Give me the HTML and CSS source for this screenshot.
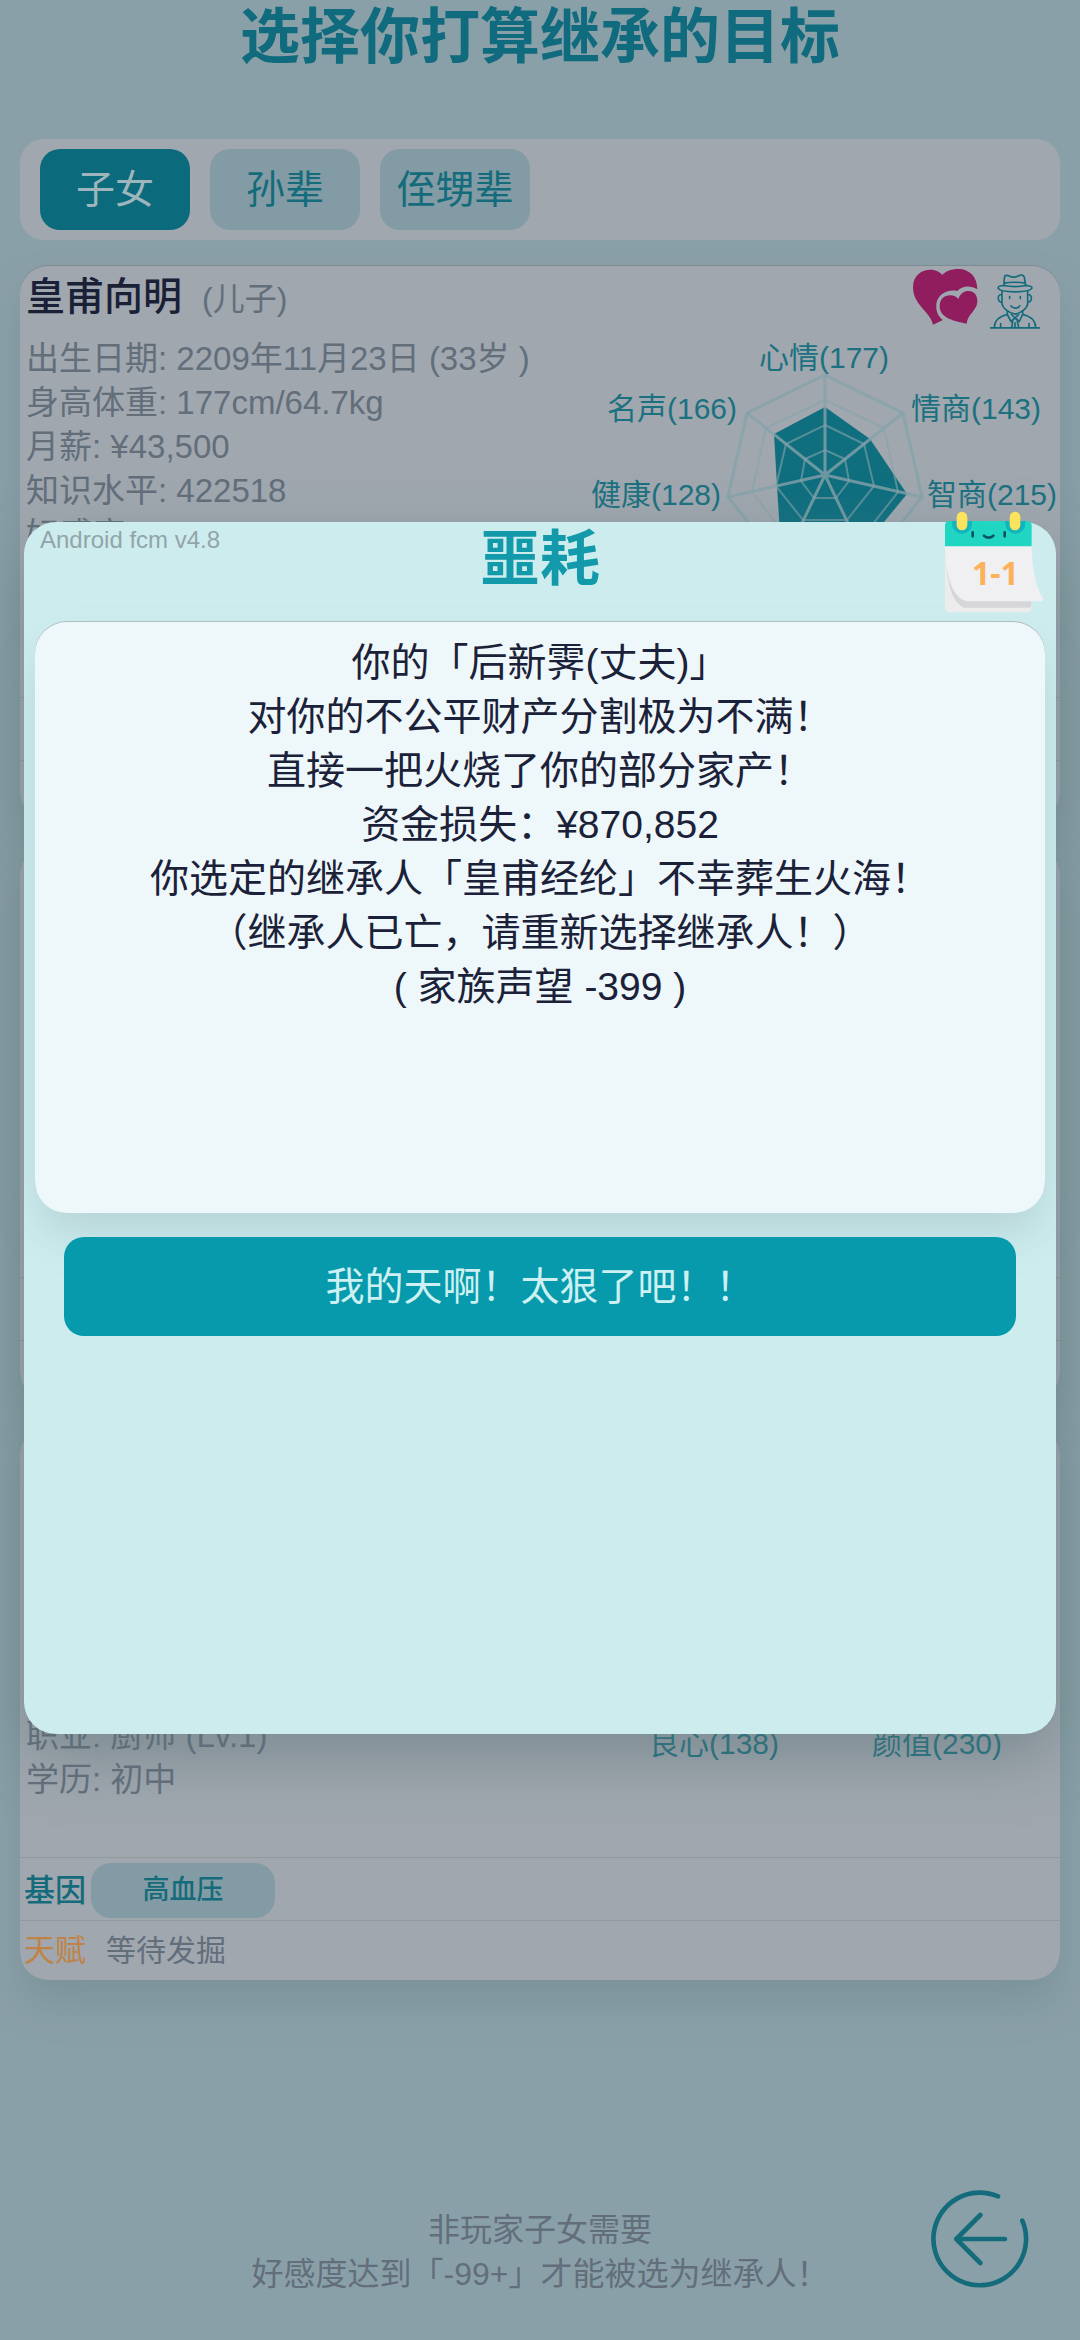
FILE: index.html
```html
<!DOCTYPE html>
<html lang="zh-CN">
<head>
<meta charset="utf-8">
<meta name="viewport" content="width=device-width, initial-scale=1">
<title>选择你打算继承的目标</title>
<link rel="stylesheet" href="styles.css">
</head>
<body>
<svg class="defs" aria-hidden="true">
  <defs>
    <g id="radar-grid" fill="none">
      <path d="M245 42 323 80 342 164 288 232 202 232 148 164 167 80Z"/>
      <path class="ring" d="M245 67 304 95 318 159 278 210 212 210 172 159 186 95Z"/>
      <path class="ring" d="M245 92 284 111 294 153 267 187 223 187 196 153 206 111Z"/>
      <path class="ring" d="M245 117 265 126 269 148 256 165 234 165 221 148 225 126Z"/>
      <path d="M245 142V42M245 142 323 80M245 142 342 164M245 142 288 232M245 142 202 232M245 142 148 164M245 142 167 80"/>
    </g>
  </defs>
</svg>

<div class="page">
  <h1 class="page-title">选择你打算继承的目标</h1>

  <nav class="tabs">
    <button class="tab tab-active" type="button">子女</button>
    <button class="tab" type="button">孙辈</button>
    <button class="tab" type="button">侄甥辈</button>
  </nav>

  <main class="cards">
    <article class="card">
      <header class="card-head">
        <h2 class="name">皇甫向明</h2>
        <span class="relation">(儿子)</span>
        <svg class="icon-hearts" viewBox="0 0 195 168" aria-hidden="true">
          <path fill="#901e5f" d="M60 167C52 128 0 108 0 55 0 18 27 2 52 2 70 2 82 10 88 18 98 6 116 0 136 0 170 0 193 24 193 61 170 48 147 51 133 66 101 60 73 78 70 106 68 130 78 146 90 153Z"/>
          <path fill="#901e5f" d="M161 164C128 158 80 148 80 112 80 90 94 79 111 79 123 79 131 84 136 90 142 74 153 66 166 66 184 66 194 80 193 99 191 126 163 136 161 164Z"/>
        </svg>
        <svg class="icon-person" viewBox="0 0 150 164" fill="none" stroke="#146b7b" stroke-width="5" stroke-linecap="round" stroke-linejoin="round" aria-hidden="true">
          <path d="M42 34C42 22 42 12 45 5 52 1 58 6 64 8 72 10 80 8 86 5 93 0 101 3 103 9L107 34M42 27C60 24 89 24 106 27"/>
          <path d="M42 34C30 34 24 37 24 42 28 50 50 53 75 53 100 53 121 50 126 42 126 37 119 34 107 34 88 38 62 38 42 34Z"/>
          <path d="M36 52V88C38 102 56 117 75 120 94 117 112 102 113 88V52M36 61C20 60 22 84 36 84M113 61C129 60 127 84 113 84"/>
          <path d="M59 67V73M91 67V73M63 95C68 104 84 104 89 95"/>
          <path d="M52 111V121L63 142 75 130 88 142 98 121V111M52 121C28 126 14 136 13 160M98 121C122 126 136 136 137 160M64 121 86 142M86 121 64 142M68 142 65 160M82 142 86 160M75 146V160M32 148V160M117 148V160M2 161H148"/>
        </svg>
      </header>
      <div class="card-body">
        <ul class="facts">
          <li>出生日期: 2209年11月23日 (33岁 )</li>
          <li>身高体重: 177cm/64.7kg</li>
          <li>月薪: ¥43,500</li>
          <li>知识水平: 422518</li>
          <li>好感度: -99</li>
        </ul>
        <svg class="radar" viewBox="0 0 480 290" role="img" aria-label="属性">
          <path class="radar-value" d="M245 74 290 106 327 161 281 217 202 232 197 153 194 101Z"/>
          <use href="#radar-grid"/>
          <text x="244" y="35">心情(177)</text>
          <text x="396" y="86">情商(143)</text>
          <text x="412" y="172">智商(215)</text>
          <text x="76" y="172">健康(128)</text>
          <text x="92" y="86">名声(166)</text>
        </svg>
      </div>
      <div class="row gene"></div>
      <div class="row talent"></div>
    </article>

    <article class="card">
      <header class="card-head"></header>
      <div class="card-body"></div>
      <div class="row gene"></div>
      <div class="row talent"></div>
    </article>

    <article class="card">
      <header class="card-head"></header>
      <div class="card-body">
        <ul class="facts facts-end">
          <li>职业: 厨师 (Lv.1)</li>
          <li>学历: 初中</li>
        </ul>
        <svg class="radar" viewBox="0 0 480 290" role="img" aria-label="属性">
          <use href="#radar-grid"/>
          <text x="134" y="261">良心(138)</text>
          <text x="357" y="261">颜值(230)</text>
        </svg>
      </div>
      <div class="row gene">
        <span class="gene-label">基因</span>
        <span class="pill">高血压</span>
      </div>
      <div class="row talent">
        <span class="talent-label">天赋</span>
        <span>等待发掘</span>
      </div>
    </article>
  </main>

  <footer class="footer">
    <p class="hint">非玩家子女需要<br>好感度达到「-99+」才能被选为继承人！</p>
    <button class="back" type="button" aria-label="返回">
      <svg viewBox="0 0 294 294" fill="none" stroke="#146b7b" stroke-width="14" stroke-linecap="round" stroke-linejoin="round">
        <path d="M201 19A139 139 0 1 0 274 92M222 147H76M148 75 76 147 148 219"/>
      </svg>
    </button>
  </footer>
</div>

<div class="overlay">
  <section class="dialog" role="dialog" aria-modal="true" aria-labelledby="dialog-title">
    <span class="version">Android fcm v4.8</span>
    <h2 class="dialog-title" id="dialog-title">噩耗</h2>
    <svg class="calendar" viewBox="0 0 300 306" aria-label="1-1">
      <rect x="3" y="70" width="260" height="234" rx="14" fill="#ececec"/>
      <path fill="#d6d6d8" d="M3 106V110C10 220 20 270 60 290H255Q262 290 262 282V250Z"/>
      <path fill="#f0eff2" d="M3 100H263C264 170 275 230 297 262Q299 270 290 271H70C20 262 4 180 3 100Z"/>
      <path fill="#20d6c2" d="M3 106V44Q3 30 17 30H249Q263 30 263 44V106Z"/>
      <path fill="#12b5bd" d="M24 30H84V38A30 30 0 0 1 24 38ZM184 30H244V38A30 30 0 0 1 184 38Z"/>
      <rect x="38" y="2" width="32" height="56" rx="16" fill="#fbe35e"/>
      <rect x="197" y="2" width="32" height="56" rx="16" fill="#fbe35e"/>
      <path d="M86 64V76M182 64V76M120 74Q134 86 148 74" fill="none" stroke="#0f5261" stroke-width="8" stroke-linecap="round"/>
      <text x="154" y="222">1-1</text>
    </svg>
    <div class="message">
      <p>你的「后新霁(丈夫)」</p>
      <p>对你的不公平财产分割极为不满！</p>
      <p>直接一把火烧了你的部分家产！</p>
      <p>资金损失：¥870,852</p>
      <p>你选定的继承人「皇甫经纶」不幸葬生火海！</p>
      <p>（继承人已亡，请重新选择继承人！）</p>
      <p>( 家族声望 -399 )</p>
    </div>
    <button class="confirm" type="button">我的天啊！太狠了吧！！</button>
  </section>
</div>
</body>
</html>
```
FILE: styles.css
```css
* {
  box-sizing: border-box;
  margin: 0;
  padding: 0;
}

body {
  background: #8aa0a8;
  color: #636e7b;
  font-family: "Liberation Sans", "Noto Sans CJK SC", sans-serif;
  font-size: 32px;
  line-height: 44px;
}

button {
  border: 0;
  font: inherit;
}

.defs {
  position: absolute;
  width: 0;
  height: 0;
}

.page {
  display: flex;
  flex-direction: column;
  min-height: 100vh;
  padding: 0 20px;
}

.page-title {
  color: #0f6b7d;
  font-size: 60px;
  line-height: 76px;
  text-align: center;
  margin-bottom: 63px;
}

.tabs {
  display: flex;
  gap: 20px;
  padding: 10px 20px;
  background: #a0a7af;
  border-radius: 24px;
}

.tab {
  width: 150px;
  height: 81px;
  border-radius: 20px;
  background: #829ba4;
  color: #146b7b;
  font-size: 39px;
}

.tab-active {
  background: #0b6b7c;
  color: #9fb5bc;
}

.cards {
  display: flex;
  flex-direction: column;
  gap: 25px;
  margin-top: 25px;
}

.card {
  display: flex;
  flex-direction: column;
  background: #a0a7af;
  border-radius: 28px;
  box-shadow: 0 24px 40px -4px rgba(100, 125, 130, 0.4), inset 0 1px #7d8a92;
}

.card-head {
  display: flex;
  align-items: center;
  height: 68px;
  padding: 0 20px 4px 6px;
}

.name {
  color: #1a2036;
  font-size: 39px;
  font-weight: 500;
}

.relation {
  flex: 1;
  padding: 4px 0 0 20px;
}

.icon-hearts {
  width: 65px;
  height: 56px;
}

.icon-person {
  width: 50px;
  height: 55px;
  margin: 8px 0 0 12px;
}

.card-body {
  display: flex;
  height: 364px;
}

.facts {
  flex: 1;
  font-size: 33px;
  list-style: none;
  padding: 4px 0 0 6px;
  white-space: nowrap;
}

.facts-end {
  padding-top: 221px;
}

.radar {
  flex: none;
  width: 480px;
  height: 290px;
}

.radar .radar-value {
  fill: #0f6f7f;
  stroke: none;
}

.radar use {
  stroke: #86a3aa;
  stroke-width: 3px;
  stroke-opacity: 0.8;
}

.ring {
  stroke-width: 2px;
  stroke-opacity: 0.6;
}

.radar text {
  fill: #1c7180;
  font-size: 30px;
  text-anchor: middle;
}

.row {
  display: flex;
  align-items: center;
  padding: 0 4px;
  border-top: 1px solid #8f999f;
}

.gene {
  gap: 5px;
  height: 63px;
  padding-top: 3px;
}

.talent {
  gap: 20px;
  height: 60px;
  font-size: 30px;
}

.gene-label {
  color: #146b7b;
  font-size: 31px;
  font-weight: 500;
}

.pill {
  width: 184px;
  border-radius: 20px;
  background: #829ba4;
  color: #146b7b;
  font-size: 27px;
  font-weight: 500;
  line-height: 55px;
  text-align: center;
}

.talent-label {
  color: #bf8347;
  font-size: 31px;
}

.footer {
  position: relative;
  margin-top: auto;
  padding-bottom: 44px;
}

.hint {
  text-align: center;
}

.back {
  position: absolute;
  right: 31px;
  bottom: 52px;
  width: 98px;
  height: 98px;
  background: none;
}

.back svg {
  display: block;
}

.overlay {
  position: absolute;
  inset: 0;
  padding: 522px 24px 0;
}

.dialog {
  position: relative;
  display: flex;
  flex-direction: column;
  min-height: 1212px;
  padding: 0 11px;
  background: #cdecee;
  border-radius: 32px;
  box-shadow: 0 24px 60px rgba(90, 115, 120, 0.5);
}

.version {
  position: absolute;
  top: 0;
  left: 16px;
  color: #91a5a9;
  font-size: 24px;
  line-height: 36px;
}

.dialog-title {
  color: #129aab;
  font-size: 60px;
  line-height: 76px;
  margin-bottom: 23px;
  text-align: center;
}

.calendar {
  position: absolute;
  top: -11px;
  right: 12px;
  width: 100px;
  height: 102px;
}

.calendar text {
  fill: #fbb25a;
  font-family: "Noto Sans", sans-serif;
  font-size: 96px;
  font-weight: 700;
  text-anchor: middle;
}

.message {
  min-height: 592px;
  padding: 15px 0;
  background: #eef7f9;
  border-radius: 32px;
  box-shadow: 0 24px 40px -4px rgba(140, 170, 175, 0.35), inset 0 1px #aebfc2;
  color: #1b2138;
  font-size: 39px;
  line-height: 54px;
  text-align: center;
}

.confirm {
  height: 99px;
  margin: 24px 29px 0;
  border-radius: 20px;
  background: #079aac;
  color: #cdf0f2;
  font-size: 39px;
  position: relative;
}
```
